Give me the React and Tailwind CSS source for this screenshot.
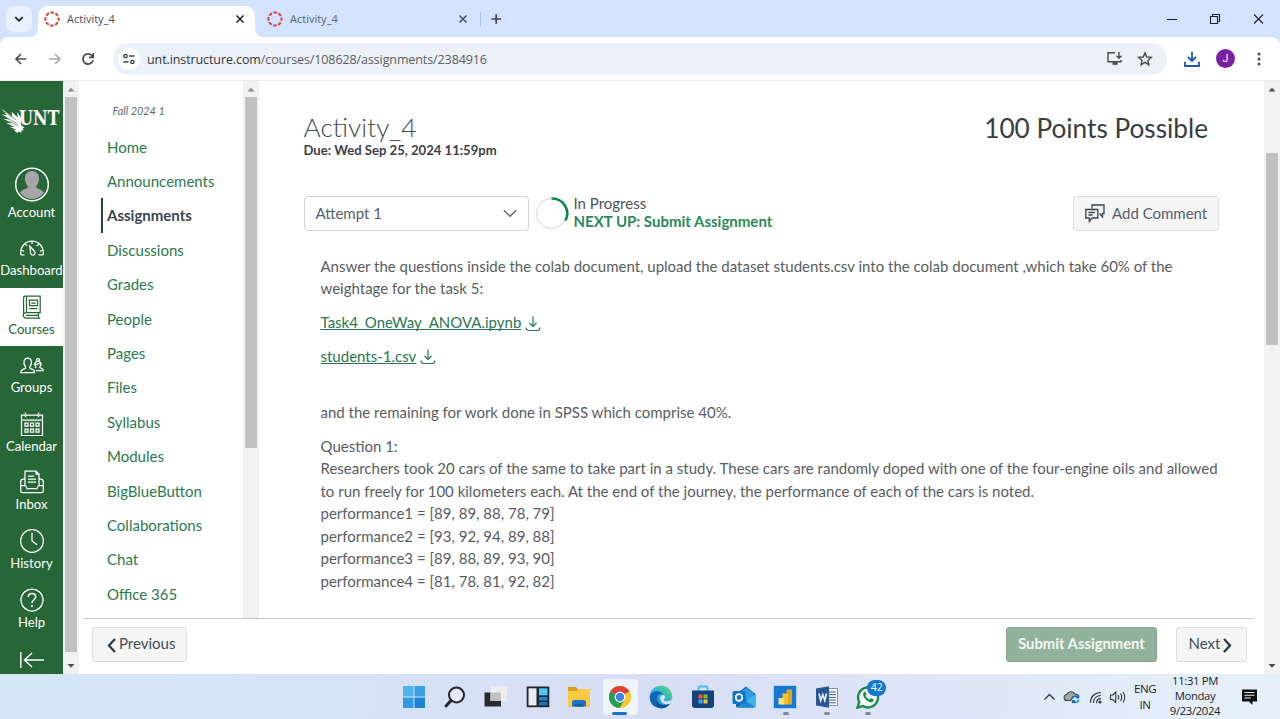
import React from "react";

const COURSE_LINKS = [
  "Home", "Announcements", "Assignments", "Discussions", "Grades", "People", "Pages",
  "Files", "Syllabus", "Modules", "BigBlueButton", "Collaborations", "Chat", "Office 365",
];

function Ring() {
  return (
    <svg className="size-4 shrink-0" viewBox="0 0 16 16" fill="none">
      <circle cx="8" cy="8" r="6.6" stroke="#d8453a" strokeWidth="2" strokeDasharray="3.6 1.58" strokeDashoffset="1.8" />
    </svg>
  );
}

function Cross({ color }) {
  return (
    <svg className="size-2.5 shrink-0" viewBox="0 0 10 10" fill="none" stroke={color} strokeWidth="1.6">
      <path d="M1.5 1.5l7 7M8.5 1.5l-7 7" />
    </svg>
  );
}

function TabStrip() {
  return (
    <div className="flex h-[37px] shrink-0 items-stretch bg-[#d3e2fd]">
      <div className="flex w-[38px] items-center pl-[6px]">
        <div className="flex size-[26px] items-center justify-center rounded-lg bg-[#e9f0fe]">
          <svg className="size-3" viewBox="0 0 12 12" fill="none" stroke="#202124" strokeWidth="1.8"><path d="M2.3 4.2L6 7.8l3.7-3.6" /></svg>
        </div>
      </div>
      <div className="relative mt-[6px] flex w-[217px] items-center rounded-t-[9px] bg-white pr-[10px] pb-[5px] pl-[6px]">
        <svg className="absolute bottom-0 -left-2 size-2" viewBox="0 0 8 8" fill="#fff"><path d="M8 0v8H0a8 8 0 0 0 8-8z" /></svg>
        <svg className="absolute -right-2 bottom-0 size-2" viewBox="0 0 8 8" fill="#fff"><path d="M0 0v8h8a8 8 0 0 1-8-8z" /></svg>
        <Ring />
        <span className="ml-[7px] flex-1 pt-px font-['Open_Sans','Noto_Sans',sans-serif] text-[11px] text-[#4a4d50]">Activity_4</span>
        <Cross color="#202124" />
      </div>
      <div className="flex w-[213px] items-center pl-[12px] pt-px">
        <Ring />
        <span className="ml-[7px] flex-1 pt-px font-['Open_Sans','Noto_Sans',sans-serif] text-[11px] text-[#5a6478]">Activity_4</span>
        <Cross color="#47506a" />
      </div>
      <div className="flex flex-1 items-center pl-[12px]">
        <div className="h-[14px] w-px bg-[#a3c2f6]" />
        <svg className="ml-[9px] size-3" viewBox="0 0 12 12" stroke="#3c4350" strokeWidth="1.7"><path d="M1.5 6h9.5M6.2 1.3v9.5" /></svg>
      </div>
      <div className="flex items-center pr-[15px]">
        <svg className="h-3 w-[102px]" viewBox="0 0 102 12" fill="none" stroke="#202124" strokeWidth="1.1">
          <path d="M4 6.5h10M91 1.5l9 9M100 1.5l-9 9" />
          <path d="M47.5 3.5h7v7h-7zM49.5 3.5v-2h7v7h-2" />
        </svg>
      </div>
    </div>
  );
}

function Toolbar() {
  return (
    <div className="h-[43px] shrink-0 bg-[#d3e2fd]">
      <div className="flex h-full items-center rounded-t-lg bg-white pl-[14px]">
        <svg className="size-3.5" viewBox="0 0 14 14" fill="none" stroke="#474a4d" strokeWidth="1.6"><path d="M12.3 7H2M7 2L2 7l5 5" /></svg>
        <svg className="ml-[20px] size-3.5" viewBox="0 0 14 14" fill="none" stroke="#a6a8aa" strokeWidth="1.5"><path d="M1 7h10.7M7 2l5 5-5 5" /></svg>
        <svg className="ml-[19px] size-3.5" viewBox="0 0 14 14" fill="none" stroke="#474a4d" strokeWidth="1.7"><path d="M12 8.2A5.1 5.1 0 1 1 10.7 3.4L12.2 5M12.3 1v4.3H8" /></svg>
        <div className="ml-[18px] flex h-8 w-[1054px] items-center rounded-full bg-[#ecf0f9] pl-[5px] pr-[14px]">
          <div className="flex size-[22px] items-center justify-center rounded-full bg-white">
            <svg className="size-3" viewBox="0 0 12 12" fill="none" stroke="#3c4043" strokeWidth="1.4"><circle cx="2.5" cy="3" r="1.6" /><path d="M6 3h5.5M.5 9h5" /><circle cx="9.4" cy="9" r="1.6" /></svg>
          </div>
          <span className="ml-[7px] flex-1 pt-[3px] font-['Open_Sans','Noto_Sans',sans-serif] text-[12.5px] tracking-[-0.1px] text-[#5b5e62]"><span className="text-[#35383b]">unt.instructure.com</span>/courses/108628/assignments/2384916</span>
          <svg className="h-[15px] w-4" viewBox="0 0 16 15" fill="none" stroke="#474a4d" strokeWidth="1.4"><path d="M8 1.7H1v9h13V9M12 1v6M9.5 4.8L12 7.2l2.5-2.4" /><path d="M5.5 12.5h5" strokeWidth="2.6" /></svg>
          <svg className="ml-[14px] size-4" viewBox="0 0 16 16" fill="none" stroke="#474a4d" strokeWidth="1.4"><path d="M8 1.9l1.8 4.1 4.5.4-3.4 3 1 4.4L8 11.4l-3.9 2.4 1-4.4-3.4-3 4.5-.4z" /></svg>
        </div>
        <svg className="ml-[17px] size-4" viewBox="0 0 16 16" fill="none" stroke="#1a57b0" strokeWidth="1.8"><path d="M8 .8v9M4 6l4 4 4-4M1 10.8V15h14v-4.2" /></svg>
        <div className="ml-[16px] flex size-[19px] items-center justify-center rounded-full bg-[#7a1fa2] font-['Roboto',sans-serif] text-[10.5px] text-white">J</div>
        <svg className="ml-[22px] h-4 w-1" viewBox="0 0 4 16" fill="#474a4d"><circle cx="2" cy="3" r="1.5" /><circle cx="2" cy="8" r="1.5" /><circle cx="2" cy="13" r="1.5" /></svg>
      </div>
    </div>
  );
}

function Arrow({ down, color }) {
  return (
    <svg className="h-[16px] w-full shrink-0" viewBox="0 0 16 16" fill={color}>
      {down ? <path d="M4.5 6h7L8 9.8z" /> : <path d="M4.5 10.5h7L8 6.7z" />}
    </svg>
  );
}

const NAV_ICONS = {
  Dashboard: (
    <><path d="M4.5 18.8H1.2A1 1 0 0 1 .6 18C.6 10 5.4 5 12 5s11.4 5 11.4 13a1 1 0 0 1-.6.8h-4.3" /><path d="M9.8 10.2l4.400 4.800c1.600 1.800.6 4.200-1.200 4.200s-2.600-1.500-2.500-3.200zM12 5v3M5.200 8l2 2M18.800 8l-2 2M1.500 14.500l2.500.7M22.500 14.500l-2.500.7" /></>
  ),
  Courses: (
    <><path d="M3.600 20V2.800A1.800 1.800 0 0 1 5.400 1h14.800v16.500H6a2.600 2.600 0 0 0 0 5.500h14.200M6.500 1v16.500M18.800 17.500c-.8 1.600-.8 3.800 0 5.500M6 20.300h12M9.500 5.200h8v5.500h-8zM11.300 8h4.400M9.500 13.700h8" /></>
  ),
  Groups: (
    <g transform="translate(0 1.500)"><path d="M.8 18c0-2 1.500-3 4-3.800 1-.4 1-1.400.4-2.400-2.600-4-1-8.300 2.500-8.300s5.100 4.300 2.500 8.300c-.6 1-.6 2 .4 2.400 2.500.8 4 1.800 4 3.800z" /><path d="M16 16.200h7.300c0-1.400-.8-2-2.300-2.500-1.200-.4-1.500-1-.9-1.900a3 3 0 1 0-4.400 0c.5.800.3 1.300-.7 1.700M17 6.700a1.500 1.500 0 1 1 2 0M15.700 9.800c1.500.2 3-.2 4.500-1.200" /></g>
  ),
  Calendar: (
    <><path d="M1.500 3h21v20.500h-21zM1.500 8h21M5.500.5V5M18.500.5V5" /><path d="M5 11h3v3H5zM10.500 11h3v3h-3zM16 11h3v3h-3zM5 17h3v3H5zM10.500 17h3v3h-3zM16 17h3v3h-3z" /></>
  ),
  Inbox: (
    <><path d="M5 15.500V1h11l3 3v11.500M16 1v3h3M8 6h6M8 9h8M8 12h8" /><path d="M5 9H3.500A2.800 2.800 0 0 0 .7 11.800V21c0 1 .8 1.700 1.700 1.700h19.200c.9 0 1.700-.7 1.700-1.700v-9.200A2.800 2.800 0 0 0 20.500 9H19M.7 15.500h4.800l1.600 3h9.800l1.600-3h4.800" /></>
  ),
  History: (
    <><circle cx="12" cy="12" r="11.300" /><path d="M12 3.800V12l5 3.800" /></>
  ),
  Help: (
    <><circle cx="12" cy="12" r="11" /><path d="M8.300 9c0-2 1.600-3.500 3.700-3.500s3.700 1.400 3.700 3.300c0 2.900-3.700 3.100-3.700 6.100M12 17v2" strokeWidth="1.500" /></>
  ),
};

function GlobalItem({ name }) {
  const active = name === "Courses";
  return (
    <div className={active ? "flex h-[58.6px] flex-col items-center bg-white pt-[7px] text-[#276636]" : "flex h-[58.6px] flex-col items-center pt-[7px] text-white"}>
      <svg className="size-6 shrink-0" viewBox="0 0 24 24" fill="none" stroke="currentColor" strokeWidth="1.250">{NAV_ICONS[name]}</svg>
      <span className="text-[13.1px] leading-[21px] whitespace-nowrap">{name}</span>
    </div>
  );
}

function GlobalNav() {
  return (
    <div className="flex w-[63px] shrink-0 flex-col overflow-hidden bg-[#276636]">
      <div className="flex h-[85px] shrink-0 items-center pb-[7px]">
        <svg className="h-[28px] w-[63px] overflow-visible" viewBox="0 0 63 28" fill="#fff">
          <path d="M1.300 2.500l11 8-.7-4.800 6 5.500-.2-5 3.600 5.500v7l3.500 3-2 .8 1.200 1.700-2.700.2.800 2-3.600-.7-.6 1.500-4.200-3.500 3.200.2-6.800-3.200 5 .2-8.700-4 6 .4L3.100 12.800l6.500.8L1.800 8.300l5 1z" />
          <path d="M3.500 5l13 9M4 10.200l13 7.300M9 15l9 5" stroke="#276636" strokeWidth=".6" />
          <text x="19" y="18.800" fontFamily="DejaVu Serif, serif" fontWeight="700" fontSize="19.500" textLength="40.500" lengthAdjust="spacingAndGlyphs">UNT</text>
        </svg>
      </div>
      <div className="flex h-[63px] shrink-0 flex-col items-center text-white">
        <svg className="size-[36px] shrink-0" viewBox="0 0 36 36">
          <circle cx="18" cy="18.500" r="16.300" fill="#276636" stroke="#fff" strokeWidth="1.500" />
          <path d="M18 5c4.500 0 7 3.200 7 7.500 0 3-1 5.700-2.800 7.300l.1 2.300c3 1 6.200 2 7.700 4.500A14.500 14.500 0 0 1 18 33 14.500 14.500 0 0 1 6 26.600c1.500-2.500 4.700-3.500 7.700-4.500l.1-2.300C12 18.200 11 15.500 11 12.500c0-4.300 2.500-7.500 7-7.500z" fill="#a6a6a8" />
        </svg>
        <span className="text-[13.1px] leading-[20px]">Account</span>
      </div>
      {Object.keys(NAV_ICONS).map((n) => <GlobalItem key={n} name={n} />)}
      <div className="flex justify-center pt-[11.500px]">
        <svg className="h-[18px] w-6" viewBox="0 0 24 18" fill="none" stroke="#fff" strokeWidth="1.400"><path d="M.8 1v16M24 9H4.500M12 2L4.500 9l7.500 7" /></svg>
      </div>
    </div>
  );
}

function CourseNav() {
  return (
    <div className="flex w-[164px] shrink-0 flex-col overflow-hidden">
      <div className="mt-[19.5px] h-[29.100px] pl-[33.5px] text-[10.9px] leading-5 text-[#66696c] italic">Fall 2024 1</div>
      {COURSE_LINKS.map((l) =>
        l === "Assignments" ? (
          <div key={l} className="ml-[22px] flex h-[34.420px] shrink-0 items-center border-l-2 border-[#2d3b45] pl-1 text-[15px] font-bold text-[#3a4651]">{l}</div>
        ) : (
          <div key={l} className="ml-[28px] flex h-[34.420px] shrink-0 items-center text-[15px] text-[#2b7a4f]">{l}</div>
        )
      )}
    </div>
  );
}

function FileLink({ children }) {
  return (
    <p className="mt-[11.250px] flex items-center text-[#2b7550]">
      <span className="underline decoration-1 underline-offset-1 [text-decoration-skip-ink:none]">{children}</span>
      <svg className="mt-[3px] ml-[4px] size-4" viewBox="0 0 16 16" fill="none" stroke="currentColor" strokeWidth="1.200"><path d="M8 .5v10M4.500 7L8 10.500 11.500 7M1 11.500c.3 2 1 3 2.500 3h9c1.500 0 2.200-1 2.500-3" /></svg>
    </p>
  );
}

function Assignment() {
  return (
    <div className="flex-1 overflow-hidden pl-[44.5px]">
      <div className="flex h-[115px] justify-between pt-[31px] pr-[56px]">
        <div>
          <h1 className="text-[26.3px] leading-[30px] font-light text-[#3f4a53]">Activity_4</h1>
          <div className="text-[13.1px] leading-[16px] font-bold text-[#3d4146]">Due: Wed Sep 25, 2024 11:59pm</div>
        </div>
        <div className="text-[26.2px] leading-[32px] text-[#383d43]">100 Points Possible</div>
      </div>
      <div className="flex h-[35px] items-center pr-[45px]">
        <div className="flex h-[35px] w-[225px] items-center justify-between rounded-[4px] border border-[#cfd4d8] pr-[11px] pl-[11px] text-[15px] text-[#55606a]">
          <span className="pb-px">Attempt 1</span>
          <svg className="h-[9px] w-[14px]" viewBox="0 0 14 9" fill="none" stroke="#55606a" strokeWidth="1.300"><path d="M.8 1.200L7 7.300l6.200-6.100" /></svg>
        </div>
        <svg className="ml-[7px] size-[33px]" viewBox="0 0 33 33" fill="none"><circle cx="15.500" cy="16.500" r="15" stroke="#d0d3d6" /><path d="M15.500 1.500A15 15 0 0 1 29.500 23.500" stroke="#0b874b" strokeWidth="2.600" /></svg>
        <div className="ml-[5px] flex-1 pb-[3px] text-[15px] leading-[18px]">
          <div className="text-[#4b5259]">In Progress</div>
          <div className="font-bold text-[#2a8a58]">NEXT UP: Submit Assignment</div>
        </div>
        <div className="flex h-[35px] w-[146px] items-center rounded-[3px] border border-[#dcdee0] bg-[#f5f5f5] pl-[11px] text-[15px] text-[#55606a]">
          <svg className="mr-[7px] h-[19px] w-5 shrink-0" viewBox="0 0 20 19" fill="none" stroke="#36434d" strokeWidth="1.300"><path d="M7 4.500V1h12v8.500h-1.500V13l-3-3.500M.8 5.500h12V14H7l-2.700 3.500V14H.8zM3.500 8.500h6.500M3.500 11h4" /></svg>
          <span className="pb-px whitespace-nowrap">Add Comment</span>
        </div>
      </div>
      <div className="pt-[23.5px] pl-[17px] text-[15px] leading-[22.500px] whitespace-nowrap text-[#595c5f]">
        <p>Answer the questions inside the colab document, upload the dataset students.csv into the colab document ,which take 60% of the<br />weightage for the task 5:</p>
        <FileLink>Task4_OneWay_ANOVA.ipynb</FileLink>
        <FileLink>students-1.csv</FileLink>
        <p className="mt-[33.500px]">and the remaining for work done in SPSS which comprise 40%.</p>
        <p className="mt-[11.500px]">
          Question 1:<br />
          Researchers took 20 cars of the same to take part in a study. These cars are randomly doped with one of the four-engine oils and allowed<br />
          to run freely for 100 kilometers each. At the end of the journey, the performance of each of the cars is noted.<br />
          performance1 = [89, 89, 88, 78, 79]<br />
          performance2 = [93, 92, 94, 89, 88]<br />
          performance3 = [89, 88, 89, 93, 90]<br />
          performance4 = [81, 78, 81, 92, 82]
        </p>
      </div>
    </div>
  );
}

function Footer() {
  return (
    <div className="h-[56px] shrink-0 pr-[10px] pl-[5px]">
      <div className="flex h-full items-start border-t border-[#c3c7ca] pt-[8px] pr-[7px] pl-2 text-[15px] text-[#414c55]">
        <div className="flex h-[35px] w-[95px] items-center rounded-[3px] border border-[#dcdee0] bg-[#f5f5f5] pl-[14px]">
          <svg className="mt-px mr-[3px] h-[15px] w-[9px]" viewBox="0 0 9 15" fill="none" stroke="#2d3b45" strokeWidth="2.300"><path d="M8 1L2 7.500 8 14" /></svg>
          <span className="pb-[2px]">Previous</span>
        </div>
        <div className="ml-auto flex h-[35px] w-[151px] items-center justify-center rounded-[3px] border border-[#84a68b] bg-[#93b29b] pb-[2px] text-[14.8px] font-bold whitespace-nowrap text-[#f3f8f4]">Submit Assignment</div>
        <div className="ml-[19px] flex h-[35px] w-[71px] items-center rounded-[3px] border border-[#dcdee0] bg-[#f5f5f5] pl-[11.5px]">
          <span className="pb-[2px]">Next</span>
          <svg className="mt-px ml-[3px] h-[15px] w-[9px]" viewBox="0 0 9 15" fill="none" stroke="#2d3b45" strokeWidth="2.300"><path d="M1 1l6 6.500L1 14" /></svg>
        </div>
      </div>
    </div>
  );
}

const TASK_ICONS = [
  <g key="win" fill="#2b93dc"><path d="M1 1h10.500v10.500H1z" fill="#50b3ee" /><path d="M12.500 1H23v10.500H12.500z" fill="#38a1e6" /><path d="M1 12.500h10.500V23H1z" fill="#309be0" /><path d="M12.500 12.500H23V23H12.500z" fill="#1d83d2" /></g>,
  <g key="search" fill="none" stroke="#23262b"><circle cx="13.500" cy="10" r="7.500" strokeWidth="2" fill="#e4ebf8" /><path d="M8 15.500L3 21" strokeWidth="3" strokeLinecap="round" /></g>,
  <g key="task"><path d="M.5 7.500H17v14H.5z" fill="#2a2b2e" /><path d="M6.500 1.500H23V16H6.500z" fill="#eeeeef" /><path d="M6.500 7.500H17V16H6.500z" fill="#c2c3c5" /></g>,
  <g key="widgets"><path d="M.7 1.500h22.600v20.700H.7z" fill="#22272e" /><path d="M2.500 3.300h8v17.100h-8z" fill="#e8ebef" /><path d="M13 3.300h8.500v7H13z" fill="#4bcbf3" /><path d="M13 12h8.500v3.600H13z" fill="#1687d4" /><path d="M13 17h8.500v3.400H13z" fill="#1377c4" /></g>,
  <g key="files"><path d="M1 2h8l2.500 3H23v16.500H1z" fill="#d99b1c" /><path d="M1 6h8.500l2-2H23v17.500H1z" fill="#fccb44" /><path d="M5 21.500V17a2 2 0 0 1 2-2h10a2 2 0 0 1 2 2v4.500z" fill="#1c75c9" /><path d="M7.500 19.500h9v2h-9z" fill="#0f5597" /></g>,
  <g key="chrome"><circle cx="12" cy="12" r="11" fill="#f7c52e" /><path d="M12 12L2.400 6.500a11 11 0 0 1 19.100 0z" fill="#df4233" /><path d="M12 12L2.400 6.500A11 11 0 0 0 11.800 23l5-8.200z" fill="#279e52" /><path d="M12 12l9.500-5.500A11 11 0 0 1 11.800 23l5-8.200z" fill="#f9ca30" /><circle cx="12" cy="12" r="5.400" fill="#fff" /><circle cx="12" cy="12" r="4.200" fill="#3f7fe6" /></g>,
  <g key="edge"><circle cx="12" cy="12" r="11.300" fill="url(#edgeA)" /><path d="M.8 12C2 5 12 4.500 14.500 10c-4-2.500-7.500 1-6.500 5 1 4.500 6 6.500 13 3.800A11.300 11.300 0 0 1 .8 12z" fill="#1564b3" /><path d="M11.500 14.500c-1-4 2.500-6 4.300-3.500.8 1.600-.3 2.700-1 3.400-.5 1.400 2.700 2.600 6.200 1.100 1-.4 1.800-1.200 2-1.900-.2 2-1 3.700-2 5.200-4 1.500-8.500.2-9.500-4.300z" fill="#d5e4f8" /><path d="M8 15.500c1 4.500 7 5.500 12.500 3.500A11.200 11.200 0 0 1 12 23.300C7 22 6.500 18 8 15.500z" fill="#124e9c" /></g>,
  <g key="store"><path d="M7.500 6V2.500a1 1 0 0 1 1-1h7a1 1 0 0 1 1 1V6" fill="none" stroke="#45bdf0" strokeWidth="1.800" /><path d="M1 5.500h22V20a3 3 0 0 1-3 3H4a3 3 0 0 1-3-3z" fill="#16427c" /><path d="M7.500 9.500h4v4h-4z" fill="#ed5a38" /><path d="M12.500 9.500h4v4h-4z" fill="#7dc242" /><path d="M7.500 14.500h4v4h-4z" fill="#39a9e8" /><path d="M12.500 14.500h4v4h-4z" fill="#f8c42a" /></g>,
  <g key="outlook"><path d="M4 9l10-7.500L23.500 9v12a1.500 1.500 0 0 1-1.500 1.500H5.500A1.500 1.500 0 0 1 4 21z" fill="#1663ad" /><path d="M10 5.500l5-2.500 6.500 5v5l-7 3z" fill="#2f9de2" /><path d="M14 16l9.500-6.500V21a1.500 1.500 0 0 1-1.500 1.500H5z" fill="#3bb4ec" /><path d="M5 22.500l9-6.500 9 6a1.500 1.500 0 0 1-1 .5z" fill="#1e8bd6" /><rect x=".5" y="6" width="13" height="13" rx="1.500" fill="#1173c9" /><circle cx="7" cy="12.500" r="3.300" fill="none" stroke="#fff" strokeWidth="1.700" /></g>,
  <g key="powerbi"><path d="M.8.800h22.400v22.400H.8z" fill="#1479d4" /><path d="M13.500 4.500H19v15h-5.500z" fill="#e3a51a" /><path d="M9.500 8.500h5.500v11H9.500z" fill="#f3c230" /><path d="M5.500 13h5.500v6.500H5.500z" fill="#fbe07a" /></g>,
  <g key="word"><path d="M12 3.500h10.500v17H12z" fill="#fff" stroke="#5a7cb0" strokeWidth=".8" /><path d="M14 7h7M14 9.700h7M14 12.400h7M14 15.100h7M14 17.800h7" stroke="#2b569a" strokeWidth="1" /><path d="M1 3.500L14 1.300v21.500L1 20.500z" fill="#2a5597" /><path d="M4 8.500l1.700 7L7.800 9.500l2 6L11.500 8.500" fill="none" stroke="#fff" strokeWidth="1.500" /></g>,
  <g key="whatsapp"><path d="M1.500 22.500l1.700-5.500A10 10 0 1 1 7 21z" fill="#f0f5f7" stroke="#1f8a4d" strokeWidth="2.400" /><path d="M7.500 7.500c1-1.500 2-1 2.300 0l.6 1.500c.3.900-1 1.400-.7 2 .8 1.700 2 2.700 3.700 3.400.7.200 1.200-1.400 2-1.100l1.900 1c.8.500.1 2.200-1.100 2.700-3.500 1.400-10.500-4.500-8.700-9.500z" fill="#1f8a4d" /></g>,
];

function Taskbar() {
  return (
    <div className="flex h-[45px] shrink-0 bg-linear-to-r from-[#d5e7f7] via-[#d7def4] to-[#e6f0fa] font-['Open_Sans','Noto_Sans',sans-serif] text-[#1d1f22]">
      <svg className="size-0" viewBox="0 0 1 1"><defs><linearGradient id="edgeA" x1="0" y1="1" x2="1" y2="0"><stop offset="0" stopColor="#1468bd" /><stop offset=".5" stopColor="#2cb1dc" /><stop offset="1" stopColor="#63dc62" /></linearGradient></defs></svg>
      <div className="flex w-[889px] shrink-0 pl-[393px]">
        {TASK_ICONS.map((icon, i) => (
          <div key={i} className="relative flex w-[41.300px] shrink-0 justify-center pt-[5px]">
            <div className={i === 5 ? "flex h-[36px] w-[35px] justify-center rounded-[4px] bg-[#eff3fb] pt-[6px]" : "pt-[6px]"}>
              <svg className="size-6" viewBox="0 0 24 24">{icon}</svg>
            </div>
            {i === 5 && <div className="absolute top-[38px] left-[13px] h-[3px] w-[15px] rounded-full bg-[#1773c6]" />}
            {i > 8 && <div className="absolute top-[38px] left-[18px] h-[3px] w-[6px] rounded-full bg-[#84878f]" />}
            {i === 11 && <div className="absolute top-[6px] left-[20px] flex h-[16px] w-[19px] items-center justify-center rounded-full bg-[#1277cf] text-[10.500px] text-white">42</div>}
          </div>
        ))}
      </div>
      <div className="flex flex-1 items-center pl-[154px]">
        <svg className="h-[22px] w-[84px] shrink-0" viewBox="0 0 84 22" fill="none" stroke="#33373c" strokeWidth="1.300">
          <path d="M1.500 13.500L6.500 8.500l5 5" />
          <path d="M24.500 14.500a3 3 0 0 1-.7-6C25 5.500 29.500 4.500 32 8c2 0 3.300 1 3.800 2.500H30l-2.500 4z" fill="#a4a6a8" stroke="#3f4246" strokeWidth="1.100" />
          <path d="M29.300 12.800a3.300 3.300 0 0 1 5.800-1.400M35.500 9.300v2.500H33M35.700 13.800a3.300 3.300 0 0 1-5.800 1.400M29.500 17.300v-2.500H32" stroke="#1b73c4" strokeWidth="1.400" />
          <path d="M47.500 16.800C47.500 10.500 51.500 6.500 58 6.500M50.500 17c0-4.500 3-7.500 7.500-7.500M53.500 17.300c0-2.800 1.700-4.600 4.500-4.600" strokeWidth="1.200" /><circle cx="57" cy="16" r="1.600" fill="#33373c" stroke="none" />
          <path d="M67.500 9h2.300l3-3v10.500l-3-3h-2.300zM75 9c1 1.500 1 3 0 4.500M77.500 7.500c1.600 2.500 1.600 5 0 7.500M80 6c2.300 3.500 2.300 7 0 10.500" strokeWidth="1.100" />
        </svg>
        <div className="ml-[4px] w-[28px] shrink-0 text-center text-[11.500px] leading-[16px] tracking-[-0.400px]">ENG<br />IN</div>
        <div className="ml-[9px] w-[54px] shrink-0 pb-[2px] text-center text-[11.300px] leading-[15px] tracking-[-0.350px] whitespace-nowrap">11:31 PM<br />Monday<br />9/23/2024</div>
        <svg className="ml-[18.500px] h-[17px] w-[17px] shrink-0" viewBox="0 0 17 17"><path d="M1 1.500h15v12h-4.500V17L8 13.500H1z" fill="#111" /><path d="M3.500 4.500h10M3.500 7.300h10M3.500 10h6.500" stroke="#e9edf2" strokeWidth="1.100" /></svg>
      </div>
    </div>
  );
}

export default function App() {
  return (
    <div className="flex h-[719px] w-[1280px] flex-col overflow-hidden bg-white font-['Lato',sans-serif]">
      <TabStrip />
      <Toolbar />
      <div className="flex h-[594px] shrink-0 flex-col border-t border-[#ececec]">
        <div className="flex h-[593px]">
          <GlobalNav />
          <div className="flex w-4 shrink-0 flex-col items-center bg-[#f1f1f1]">
            <Arrow color="#8b8b8b" />
            <div className="h-[555px] w-3 bg-[#c1c1c1]" />
            <div className="mt-auto w-full"><Arrow down color="#4c4c4c" /></div>
          </div>
          <div className="flex min-w-0 flex-1 flex-col">
            <div className="flex h-[537px]">
              <CourseNav />
              <div className="flex w-4 shrink-0 flex-col items-center bg-[#f1f1f1]">
                <Arrow color="#8b8b8b" />
                <div className="h-[351px] w-3 bg-[#c1c1c1]" />
              </div>
              <Assignment />
            </div>
            <Footer />
          </div>
          <div className="flex w-4 shrink-0 flex-col items-center bg-[#f1f1f1]">
            <Arrow color="#4c4c4c" />
            <div className="mt-[56px] h-[192px] w-3 bg-[#c1c1c1]" />
            <div className="mt-auto w-full"><Arrow down color="#4c4c4c" /></div>
          </div>
        </div>
      </div>
      <Taskbar />
    </div>
  );
}
